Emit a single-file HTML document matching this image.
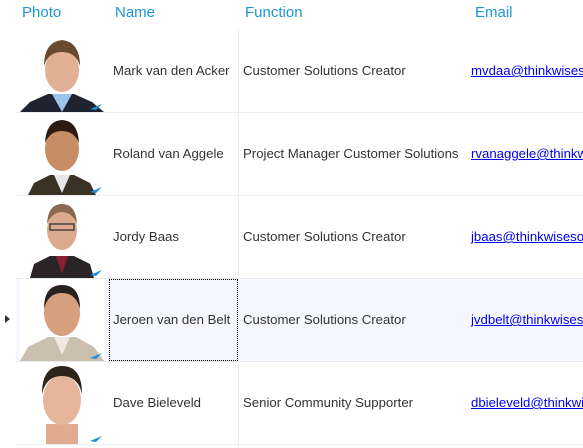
<!DOCTYPE html>
<html><head><style>
body{margin:0;background:#fff;font-family:"Liberation Sans",sans-serif}
#w{position:relative;width:583px;height:448px;overflow:hidden}
.h{position:absolute;top:4px;font-size:15px;color:#1e96cf}
.row{position:absolute;left:16px;width:567px;height:82px;border-bottom:1px solid #e8ebef}
.t{position:absolute;font-size:13.2px;color:#333;white-space:nowrap}
.e{color:#0000ee;text-decoration:underline}
.vl{position:absolute;left:238px;top:30px;width:1px;height:418px;background:#eceef1}
</style></head><body><div id="w">
<div class="h" style="left:22px">Photo</div>
<div class="h" style="left:115px">Name</div>
<div class="h" style="left:245px">Function</div>
<div class="h" style="left:475px">Email</div>

<div class="row" style="top:30px"></div>
<div class="row" style="top:113px"></div>
<div class="row" style="top:196px"></div>
<div class="row" style="top:279px;background:#f5f7fc"></div>
<div class="row" style="top:362px"></div>
<div class="vl"></div>
<div style="position:absolute;left:109px;top:279px;width:127px;height:80px;border:1px dotted #000"></div>
<div style="position:absolute;left:5px;top:315px;width:0;height:0;border-left:5px solid #333;border-top:4px solid transparent;border-bottom:4px solid transparent"></div>

<svg style="position:absolute;left:20px;top:30px" width="84" height="416">
<g><path d="M0 82 L10 72 L28 64 L54 64 L72 72 L84 82Z" fill="#1f2330"/><path d="M32 64 L42 82 L52 64Z" fill="#9cc3ea"/><ellipse cx="42" cy="40" rx="17" ry="22" fill="#e2b095"/><path d="M24 36 Q24 12 42 10 Q60 12 60 36 Q56 22 42 22 Q28 22 24 36Z" fill="#6a4a2e"/></g>
<g transform="translate(0,83)"><path d="M8 82 L14 70 L30 62 L54 62 L70 70 L76 82Z" fill="#3a3224"/><path d="M34 62 L42 80 L50 62Z" fill="#e6e6e6"/><ellipse cx="42" cy="36" rx="17" ry="22" fill="#c78d66"/><path d="M25 30 Q26 8 42 7 Q58 8 59 30 Q54 18 42 18 Q30 18 25 30Z" fill="#2b1b10"/></g>
<g transform="translate(0,166)"><path d="M10 82 L14 68 L30 60 L54 60 L70 68 L74 82Z" fill="#2a2426"/><path d="M36 60 L42 78 L48 60Z" fill="#8a2030"/><ellipse cx="42" cy="34" rx="15" ry="20" fill="#dba98e"/><rect x="30" y="28" width="24" height="6" fill="none" stroke="#444" stroke-width="1.5"/><path d="M27 28 Q28 8 42 8 Q56 8 57 28 Q52 16 42 16 Q32 16 27 28Z" fill="#8a6a52"/></g>
<g transform="translate(0,249)"><rect x="0" y="0" width="84" height="82" fill="#fff"/><path d="M0 82 L8 68 L28 58 L56 58 L74 68 L84 82Z" fill="#cbbfae"/><path d="M34 58 L42 76 L50 58Z" fill="#f0e8e0"/><ellipse cx="42" cy="34" rx="18" ry="23" fill="#d6a07e"/><path d="M24 30 Q24 6 42 6 Q60 6 60 30 Q56 14 42 14 Q28 14 24 30Z" fill="#2a2220"/></g>
<g transform="translate(0,332)"><rect x="26" y="62" width="32" height="20" fill="#e0ab90"/><ellipse cx="42" cy="38" rx="19" ry="25" fill="#e5b59c"/><path d="M22 32 Q22 4 42 4 Q62 4 62 32 Q58 14 42 14 Q26 14 22 32Z" fill="#2e2418"/></g>
<g fill="#1c8fe0"><path d="M70 79 L82 74 L76 80Z"/><path d="M70 162 L82 157 L76 163Z"/><path d="M70 245 L82 240 L76 246Z"/><path d="M70 328 L82 323 L76 329Z"/><path d="M70 411 L82 406 L76 412Z"/></g>
</svg>

<div class="t" style="left:113px;top:63px">Mark van den Acker</div>
<div class="t" style="left:243px;top:63px">Customer Solutions Creator</div>
<div class="t e" style="left:471px;top:63px">mvdaa@thinkwises</div>
<div class="t" style="left:113px;top:146px">Roland van Aggele</div>
<div class="t" style="left:243px;top:146px">Project Manager Customer Solutions</div>
<div class="t e" style="left:471px;top:146px">rvanaggele@thinkw</div>
<div class="t" style="left:113px;top:229px">Jordy Baas</div>
<div class="t" style="left:243px;top:229px">Customer Solutions Creator</div>
<div class="t e" style="left:471px;top:229px">jbaas@thinkwisesof</div>
<div class="t" style="left:113px;top:312px">Jeroen van den Belt</div>
<div class="t" style="left:243px;top:312px">Customer Solutions Creator</div>
<div class="t e" style="left:471px;top:312px">jvdbelt@thinkwises</div>
<div class="t" style="left:113px;top:395px">Dave Bieleveld</div>
<div class="t" style="left:243px;top:395px">Senior Community Supporter</div>
<div class="t e" style="left:471px;top:395px">dbieleveld@thinkwi</div>
</div></body></html>
